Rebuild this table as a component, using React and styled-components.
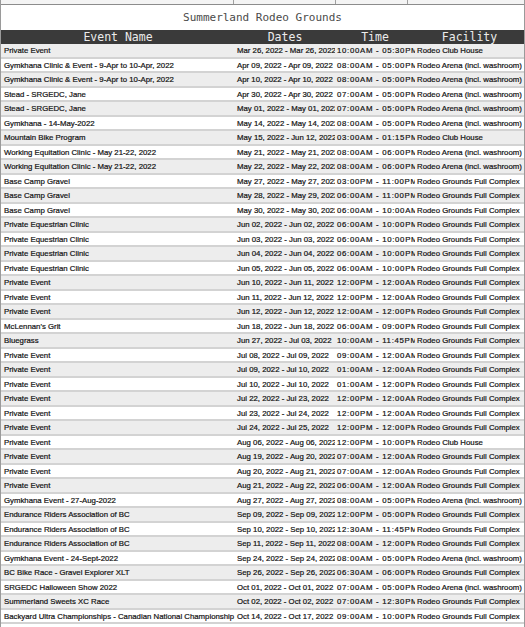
import React from 'react';
import styled, { createGlobalStyle } from 'styled-components';

const GlobalStyle = createGlobalStyle`
    html, body {
        margin: 0;
        padding: 0;
        background: #fff;
    }
`

const FULL = 'Rodeo Grounds Full Complex';
const ARENA = 'Rodeo Arena (incl. washroom)';
const CLUB = 'Rodeo Club House';

const events = [
    ['Private Event', 'Mar 26, 2022 - Mar 26, 2022', '10:00AM - 05:30PM', CLUB],
    ['Gymkhana Clinic & Event - 9-Apr to 10-Apr, 2022', 'Apr 09, 2022 - Apr 09, 2022', '08:00AM - 05:00PM', ARENA],
    ['Gymkhana Clinic & Event - 9-Apr to 10-Apr, 2022', 'Apr 10, 2022 - Apr 10, 2022', '08:00AM - 05:00PM', ARENA],
    ['Stead - SRGEDC, Jane', 'Apr 30, 2022 - Apr 30, 2022', '07:00AM - 05:00PM', ARENA],
    ['Stead - SRGEDC, Jane', 'May 01, 2022 - May 01, 2022', '07:00AM - 05:00PM', ARENA],
    ['Gymkhana - 14-May-2022', 'May 14, 2022 - May 14, 2022', '08:00AM - 05:00PM', ARENA],
    ['Mountain Bike Program', 'May 15, 2022 - Jun 12, 2022', '03:00AM - 01:15PM', CLUB],
    ['Working Equitation Clinic - May 21-22, 2022', 'May 21, 2022 - May 21, 2022', '08:00AM - 06:00PM', ARENA],
    ['Working Equitation Clinic - May 21-22, 2022', 'May 22, 2022 - May 22, 2022', '08:00AM - 06:00PM', ARENA],
    ['Base Camp Gravel', 'May 27, 2022 - May 27, 2022', '03:00PM - 11:00PM', FULL],
    ['Base Camp Gravel', 'May 28, 2022 - May 29, 2022', '06:00AM - 11:00PM', FULL],
    ['Base Camp Gravel', 'May 30, 2022 - May 30, 2022', '06:00AM - 10:00AM', FULL],
    ['Private Equestrian Clinic', 'Jun 02, 2022 - Jun 02, 2022', '06:00AM - 10:00PM', FULL],
    ['Private Equestrian Clinic', 'Jun 03, 2022 - Jun 03, 2022', '06:00AM - 10:00PM', FULL],
    ['Private Equestrian Clinic', 'Jun 04, 2022 - Jun 04, 2022', '06:00AM - 10:00PM', FULL],
    ['Private Equestrian Clinic', 'Jun 05, 2022 - Jun 05, 2022', '06:00AM - 10:00PM', FULL],
    ['Private Event', 'Jun 10, 2022 - Jun 11, 2022', '12:00PM - 12:00AM', FULL],
    ['Private Event', 'Jun 11, 2022 - Jun 12, 2022', '12:00PM - 12:00AM', FULL],
    ['Private Event', 'Jun 12, 2022 - Jun 12, 2022', '12:00AM - 12:00PM', FULL],
    ["McLennan's Grit", 'Jun 18, 2022 - Jun 18, 2022', '06:00AM - 09:00PM', FULL],
    ['Bluegrass', 'Jun 27, 2022 - Jul 03, 2022', '10:00AM - 11:45PM', FULL],
    ['Private Event', 'Jul 08, 2022 - Jul 09, 2022', '09:00AM - 12:00AM', FULL],
    ['Private Event', 'Jul 09, 2022 - Jul 10, 2022', '01:00AM - 12:00AM', FULL],
    ['Private Event', 'Jul 10, 2022 - Jul 10, 2022', '01:00AM - 12:00PM', FULL],
    ['Private Event', 'Jul 22, 2022 - Jul 23, 2022', '12:00PM - 12:00AM', FULL],
    ['Private Event', 'Jul 23, 2022 - Jul 24, 2022', '12:00PM - 12:00AM', FULL],
    ['Private Event', 'Jul 24, 2022 - Jul 25, 2022', '12:00PM - 12:00PM', FULL],
    ['Private Event', 'Aug 06, 2022 - Aug 06, 2022', '12:00PM - 10:00PM', CLUB],
    ['Private Event', 'Aug 19, 2022 - Aug 20, 2022', '07:00AM - 12:00AM', FULL],
    ['Private Event', 'Aug 20, 2022 - Aug 21, 2022', '07:00AM - 12:00AM', FULL],
    ['Private Event', 'Aug 21, 2022 - Aug 22, 2022', '06:00AM - 12:00AM', FULL],
    ['Gymkhana Event - 27-Aug-2022', 'Aug 27, 2022 - Aug 27, 2022', '08:00AM - 05:00PM', ARENA],
    ['Endurance Riders Association of BC', 'Sep 09, 2022 - Sep 09, 2022', '12:00PM - 05:00PM', FULL],
    ['Endurance Riders Association of BC', 'Sep 10, 2022 - Sep 10, 2022', '12:30AM - 11:45PM', FULL],
    ['Endurance Riders Association of BC', 'Sep 11, 2022 - Sep 11, 2022', '08:00AM - 12:00PM', FULL],
    ['Gymkhana Event - 24-Sept-2022', 'Sep 24, 2022 - Sep 24, 2022', '08:00AM - 05:00PM', ARENA],
    ['BC Bike Race - Gravel Explorer XLT', 'Sep 26, 2022 - Sep 26, 2022', '06:30AM - 06:00PM', FULL],
    ['SRGEDC Halloween Show 2022', 'Oct 01, 2022 - Oct 01, 2022', '07:00AM - 05:00PM', ARENA],
    ['Summerland Sweets XC Race', 'Oct 02, 2022 - Oct 02, 2022', '07:00AM - 12:30PM', FULL],
    ['Backyard Ultra Championships - Canadian National Championship', 'Oct 14, 2022 - Oct 17, 2022', '09:00AM - 10:00PM', FULL],
];

// column widths shared by the header and the rows
const cols = [234, 100, 80, 109];

const Sheet = styled.div`
    width: 525px;
    height: 627px;
    overflow: hidden;
    box-sizing: border-box;
    border-left: 1px solid #9a9a9a;
    border-right: 1px solid #9a9a9a;
    background: #fff;
`

const TopStrip = styled.div`
    display: flex;
    height: 4px;
    border-bottom: 1px solid #8c8c8c;
    background: #f4f4f4;
`

const StripCell = styled.div`
    width: ${p => p.w}px;
    flex: ${p => (p.last ? 1 : 'none')};
    border-right: ${p => (p.last ? 'none' : '1px solid #a0a0a0')};
    box-sizing: border-box;
`

const Title = styled.div`
    height: 25px;
    display: flex;
    align-items: center;
    justify-content: center;
    font-family: "DejaVu Sans Mono", "Liberation Mono", monospace;
    font-size: 11px;
    color: #4a4a4a;
`

const HeaderRow = styled.div`
    display: flex;
    height: 14px;
    background: #3a3a3a;
`

const HeaderCell = styled.div`
    width: ${p => p.w}px;
    flex: ${p => (p.last ? 1 : 'none')};
    text-align: center;
    font-family: "DejaVu Sans Mono", "Liberation Mono", monospace;
    font-size: 11.5px;
    line-height: 15px;
    color: #ececec;
`

const Row = styled.div`
    display: flex;
    height: 12.5px;
    border-bottom: 2px solid #d3d3d3;
    background: ${p => (p.odd ? '#ededed' : '#ffffff')};
`

const Cell = styled.div`
    width: ${p => p.w}px;
    flex: ${p => (p.last ? 1 : 'none')};
    box-sizing: border-box;
    padding-left: ${p => p.pad || 2}px;
    overflow: hidden;
    white-space: nowrap;
    font-family: "Liberation Sans", Arial, sans-serif;
    font-size: 7.8px;
    line-height: 13px;
    letter-spacing: ${p => p.spacing || 0}px;
    color: #111;
    -webkit-text-stroke: 0.2px #111;
`

const App = () => {

    return (
        <>
            <GlobalStyle />
            <Sheet>
                <TopStrip>
                    <StripCell w={233} />
                    <StripCell w={102} />
                    <StripCell w={72} />
                    <StripCell last />
                </TopStrip>
                <Title>Summerland Rodeo Grounds</Title>
                <HeaderRow>
                    <HeaderCell w={cols[0]}>Event Name</HeaderCell>
                    <HeaderCell w={cols[1]}>Dates</HeaderCell>
                    <HeaderCell w={cols[2]}>Time</HeaderCell>
                    <HeaderCell last>Facility</HeaderCell>
                </HeaderRow>
                {events.map(([name, dates, time, facility], i) => (
                    <Row key={i} odd={i % 2 === 0}>
                        <Cell w={cols[0]} pad={3}>{name}</Cell>
                        <Cell w={cols[1]}>{dates}</Cell>
                        <Cell w={cols[2]} spacing={0.7}>{time}</Cell>
                        <Cell last>{facility}</Cell>
                    </Row>
                ))}
            </Sheet>
        </>
    )
}

export default App;
